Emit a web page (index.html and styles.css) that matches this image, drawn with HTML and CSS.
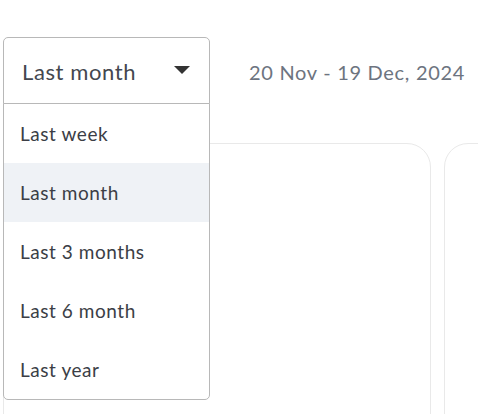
FILE: index.html
```html
<!DOCTYPE html>
<html>
<head>
<meta charset="utf-8">
<link rel="stylesheet" href="styles.css">
</head>
<body>
<div class="page">
  <div class="toolbar">
    <div class="picker">
      <div class="select">
        <span class="select-value">Last month</span>
        <svg class="caret" width="16" height="8" viewBox="0 0 16 8"><path d="M0 0H16L8 8Z" fill="#333"/></svg>
      </div>
      <ul class="menu">
        <li class="item">Last week</li>
        <li class="item active">Last month</li>
        <li class="item">Last 3 months</li>
        <li class="item">Last 6 month</li>
        <li class="item">Last year</li>
      </ul>
    </div>
    <div class="range">20 Nov - 19 Dec, 2024</div>
  </div>
  <div class="cards">
    <div class="card"></div>
    <div class="card"></div>
  </div>
</div>
</body>
</html>
```
FILE: styles.css
```css
html, body {
  margin: 0;
  padding: 0;
  background: #fff;
  font-family: Lato, "Noto Sans", sans-serif;
}
.page {
  box-sizing: border-box;
  padding: 37px 0 0 3px;
  width: 478px;
  height: 414px;
  overflow: hidden;
}
.toolbar {
  display: flex;
  align-items: center;
  height: 67px;
}
.picker {
  position: relative;
  flex: none;
  width: 207px;
  height: 67px;
  z-index: 2;
}
.select {
  box-sizing: border-box;
  height: 67px;
  border: 1px solid #b8b8b8;
  border-radius: 5px 5px 0 0;
  background: #fff;
  display: flex;
  align-items: center;
  justify-content: space-between;
  padding: 2px 19px 0 18px;
  color: #44474f;
  font-size: 22px;
  letter-spacing: 0.6px;
}
.caret {
  display: block;
  margin-top: -3px;
}
.menu {
  position: absolute;
  left: 0;
  top: 66px;
  width: 207px;
  box-sizing: border-box;
  margin: 0;
  padding: 0;
  list-style: none;
  background: #fff;
  border: 1px solid #b8b8b8;
  border-radius: 0 0 5px 5px;
  overflow: hidden;
}
.item {
  height: 59px;
  display: flex;
  align-items: center;
  padding-left: 16px;
  font-size: 19px;
  letter-spacing: 0.55px;
  color: #3b3e46;
}
.item.active {
  background: #eff2f6;
}
.range {
  flex: none;
  margin-left: 39px;
  padding-top: 3px;
  font-size: 20px;
  letter-spacing: 0.7px;
  color: #6d7480;
  white-space: nowrap;
}
.cards {
  display: flex;
  gap: 13px;
  margin-top: 39px;
}
.card {
  flex: none;
  width: 428px;
  height: 400px;
  box-sizing: border-box;
  border: 1px solid #e9e9e9;
  border-radius: 24px;
}
```
